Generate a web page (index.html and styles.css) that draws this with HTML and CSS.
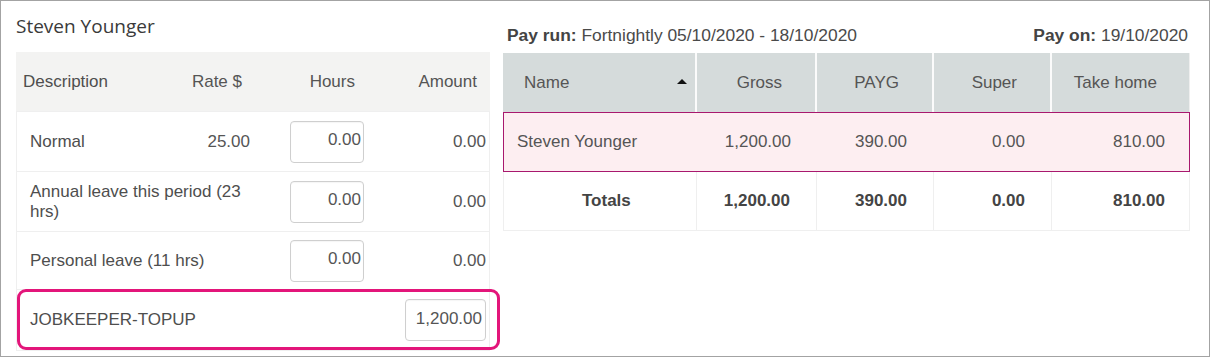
FILE: index.html
```html
<!DOCTYPE html>
<html>
<head>
<meta charset="utf-8">
<link rel="stylesheet" href="styles.css">
</head>
<body>
<div class="frame">
  <section class="left">
    <h2 class="emp-title">Steven Younger</h2>
    <div class="ltable">
      <div class="lrow lhead">
        <div class="c-desc">Description</div>
        <div class="c-rate">Rate $</div>
        <div class="c-hours">Hours</div>
        <div class="c-amt">Amount</div>
      </div>
      <div class="lrow">
        <div class="c-desc">Normal</div>
        <div class="c-rate">25.00</div>
        <div class="c-hours"><input class="num" value="0.00"></div>
        <div class="c-amt">0.00</div>
      </div>
      <div class="lrow">
        <div class="c-desc span2">Annual leave this period (23 hrs)</div>
        <div class="c-hours"><input class="num" value="0.00"></div>
        <div class="c-amt">0.00</div>
      </div>
      <div class="lrow">
        <div class="c-desc span2">Personal leave (11 hrs)</div>
        <div class="c-hours"><input class="num" value="0.00"></div>
        <div class="c-amt">0.00</div>
      </div>
      <div class="lrow jk">
        <div class="c-desc span3">JOBKEEPER-TOPUP</div>
        <div class="c-amt"><input class="num wide" value="1,200.00"></div>
        <span class="highlight"></span>
      </div>
    </div>
  </section>
  <section class="right">
    <div class="meta">
      <div><b>Pay run:</b> Fortnightly 05/10/2020 - 18/10/2020</div>
      <div><b>Pay on:</b> 19/10/2020</div>
    </div>
    <div class="rtable">
      <div class="rrow rhead">
        <div class="r-name">Name <span class="sort"></span></div>
        <div class="r-num">Gross</div>
        <div class="r-num">PAYG</div>
        <div class="r-num">Super</div>
        <div class="r-num">Take home</div>
      </div>
      <div class="rrow rsel">
        <div class="r-name">Steven Younger</div>
        <div class="r-num">1,200.00</div>
        <div class="r-num">390.00</div>
        <div class="r-num">0.00</div>
        <div class="r-num">810.00</div>
      </div>
      <div class="rrow rtot">
        <div class="r-name">Totals</div>
        <div class="r-num">1,200.00</div>
        <div class="r-num">390.00</div>
        <div class="r-num">0.00</div>
        <div class="r-num">810.00</div>
      </div>
    </div>
  </section>
</div>
</body>
</html>
```
FILE: styles.css
```css
* { box-sizing: border-box; }
html, body { margin: 0; padding: 0; background: #fff; }
body {
  font-family: "Liberation Sans", Arial, sans-serif;
  font-size: 17px;
  color: #555;
}
.frame {
  width: 1210px;
  height: 357px;
  border: 1px solid #a3a3a3;
  padding: 12px 0 0 15px;
  display: flex;
  gap: 13px;
}
.left { width: 474px; flex: none; }
.right { width: 687px; flex: none; }

.emp-title {
  margin: 0 0 13px 0;
  font-family: "Open Sans", "Noto Sans", sans-serif;
  font-weight: 400;
  font-size: 19px;
  line-height: 26px;
  color: #3a3a3a;
}

/* left table */
.ltable {
  border-left: 1px solid #efefef;
  border-right: 1px solid #efefef;
  border-bottom: 1px solid #efefef;
}
.lrow {
  display: grid;
  grid-template-columns: 153px 88px 112px 119px;
  align-items: center;
  height: 60px;
  border-top: 1px solid #efefef;
  position: relative;
  line-height: 20px;
}
.lrow.lhead {
  background: #f3f3f2;
  border-top: none;
  height: 59px;
  margin: 0 -1px;
  grid-template-columns: 154px 88px 112px 120px;
}
.lhead .c-desc { padding-left: 7px; }
.lhead .c-rate { text-align: right; padding-right: 16px; }
.lhead .c-hours { text-align: right; padding-right: 15px; }
.lhead .c-amt { text-align: right; padding-right: 13px; }

.c-desc { padding-left: 13px; color: #4e4e4e; }
.c-rate { text-align: right; padding-right: 8px; }
.c-hours { text-align: right; padding-right: 6px; display: flex; justify-content: flex-end; }
.c-amt { text-align: right; padding-right: 3px; display: flex; justify-content: flex-end; }
.span2 { grid-column: span 2; padding-right: 8px; }
.span3 { grid-column: span 3; }
.lrow:nth-child(4) { height: 58px; }

.num {
  width: 74px;
  height: 42px;
  border: 1px solid #cfcfcf;
  border-radius: 4px;
  font-family: "Liberation Sans", Arial, sans-serif;
  font-size: 17px;
  color: #555;
  text-align: right;
  padding: 0 2px 4px 0;
  background: #fff;
  box-shadow: inset 0 1px 1px rgba(0,0,0,0.04);
}
.num.wide { width: 81px; padding-right: 3px; padding-bottom: 2px; }
.jk { height: 61px; }
.highlight {
  position: absolute;
  left: 0px;
  right: -11px;
  top: -1px;
  bottom: 0;
  border: 3px solid #e3157a;
  border-radius: 9px;
  pointer-events: none;
}

/* right side */
.meta {
  display: flex;
  justify-content: space-between;
  margin: 12px 2px 8px 4px;
  line-height: 20px;
  color: #4a4a4a;
  font-size: 17.4px;
}
.meta b { color: #444; }
.rtable {
  border-right: 1px solid #efefef;
}
.rrow {
  display: grid;
  grid-template-columns: 192px 120px 117px 118px 140px;
  align-items: stretch;
}
.rrow > div {
  display: flex;
  align-items: center;
}
.rhead { height: 59px; background: #d5dbdb; }
.rhead > div + div { border-left: 2px solid #fbfbfb; }
.rhead .r-name { padding-left: 21px; padding-right: 8px; justify-content: space-between; }
.rhead .r-num { justify-content: flex-end; padding-right: 33px; }
.sort {
  width: 0; height: 0;
  border-left: 5px solid transparent;
  border-right: 5px solid transparent;
  border-bottom: 5px solid #111;
  margin-top: -2px;
}
.rsel {
  height: 60px;
  background: #fdeef1;
  border: 1px solid #a8186e;
  margin-right: -1px;
}
.rsel .r-name { padding-left: 13px; }
.rsel .r-num { justify-content: flex-end; padding-right: 26px; }
.rsel > div:nth-child(2) { padding-right: 25px; }
.rtot {
  height: 59px;
  border-bottom: 1px solid #efefef;
  border-left: 1px solid #efefef;
  font-weight: bold;
  color: #444;
}
.rtot > div + div { border-left: 1px solid #efefef; }
.rtot .r-name { padding-left: 78px; }
.rtot .r-num { justify-content: flex-end; padding-right: 26px; }
```
